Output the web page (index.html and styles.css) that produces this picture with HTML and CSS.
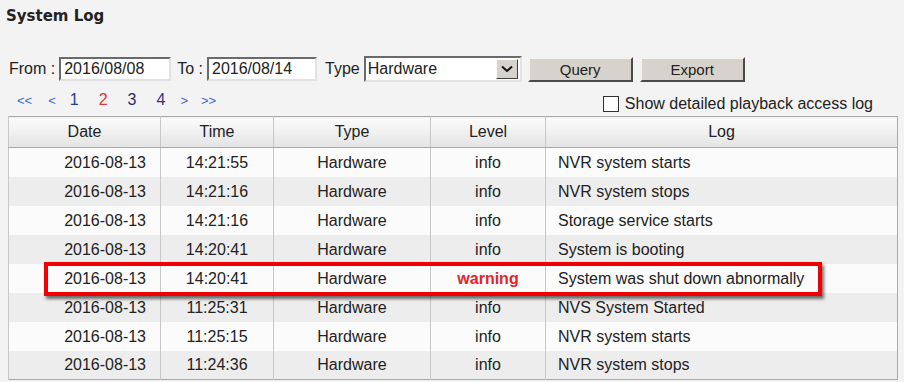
FILE: index.html
```html
<!DOCTYPE html>
<html lang="en">

<head>
    <meta charset="UTF-8">
    <title>System Log</title>
    <link rel="stylesheet" href="styles.css">
</head>

<body>
    <div class="page">
        <h1 class="page-title">System Log</h1>

        <div class="filter-bar">
            <label class="field-label">From :</label>
            <input class="date-input" type="text" value="2016/08/08">
            <label class="field-label">To :</label>
            <input class="date-input date-to" type="text" value="2016/08/14">
            <label class="field-label">Type</label>
            <div class="fake-select">
                <span class="fake-select-value">Hardware</span>
                <span class="fake-select-arrow">
                    <svg width="12" height="8" viewBox="0 0 12 8"><path d="M1 1.5 L6 6 L11 1.5" fill="none" stroke="#111" stroke-width="2"/></svg>
                </span>
            </div>
            <button class="btn">Query</button>
            <button class="btn">Export</button>
        </div>

        <div class="pager-row">
            <div class="pager">
                <a class="pg-arrow">&lt;&lt;</a>
                <a class="pg-arrow pg-tight">&lt;</a>
                <a class="pg-num pg-1">1</a>
                <a class="pg-num pg-current">2</a>
                <a class="pg-num pg-3">3</a>
                <a class="pg-num pg-4">4</a>
                <a class="pg-arrow pg-next">&gt;</a>
                <a class="pg-arrow">&gt;&gt;</a>
            </div>
            <label class="detail-check">
                <span class="check-box"></span>
                Show detailed playback access log
            </label>
        </div>

        <div class="table-wrap">
            <table class="log-table">
                <thead>
                    <tr>
                        <th class="col-date">Date</th>
                        <th class="col-time">Time</th>
                        <th class="col-type">Type</th>
                        <th class="col-level">Level</th>
                        <th class="col-log">Log</th>
                    </tr>
                </thead>
                <tbody>
                    <tr><td class="c-date">2016-08-13</td><td>14:21:55</td><td>Hardware</td><td>info</td><td class="c-log">NVR system starts</td></tr>
                    <tr><td class="c-date">2016-08-13</td><td>14:21:16</td><td>Hardware</td><td>info</td><td class="c-log">NVR system stops</td></tr>
                    <tr><td class="c-date">2016-08-13</td><td>14:21:16</td><td>Hardware</td><td>info</td><td class="c-log">Storage service starts</td></tr>
                    <tr><td class="c-date">2016-08-13</td><td>14:20:41</td><td>Hardware</td><td>info</td><td class="c-log">System is booting</td></tr>
                    <tr><td class="c-date">2016-08-13</td><td>14:20:41</td><td>Hardware</td><td class="lvl-warning">warning</td><td class="c-log">System was shut down abnormally</td></tr>
                    <tr><td class="c-date">2016-08-13</td><td>11:25:31</td><td>Hardware</td><td>info</td><td class="c-log">NVS System Started</td></tr>
                    <tr><td class="c-date">2016-08-13</td><td>11:25:15</td><td>Hardware</td><td>info</td><td class="c-log">NVR system starts</td></tr>
                    <tr><td class="c-date">2016-08-13</td><td>11:24:36</td><td>Hardware</td><td>info</td><td class="c-log">NVR system stops</td></tr>
                </tbody>
            </table>
            <!-- annotation box around the warning row -->
            <div class="highlight-box"></div>
        </div>
    </div>
</body>

</html>
```

FILE: styles.css
```css
* {
    margin: 0;
    padding: 0;
    box-sizing: border-box;
}

body {
    background-color: #f3f3f3;
    color: #222;
    font-family: "Liberation Sans", Arial, sans-serif;
    font-size: 16px;
    overflow: hidden;
}

.page {
    width: 904px;
    height: 382px;
}

.page-title {
    font-family: "DejaVu Sans", Verdana, sans-serif;
    font-size: 15px;
    font-weight: bold;
    line-height: 18px;
    color: #222;
    padding: 7px 0 0 6px;
    height: 56px;
}

/* filter row */
.filter-bar {
    display: flex;
    align-items: center;
    height: 26px;
    padding-left: 9px;
}

.field-label {
    margin-right: 4px;
}

.date-input {
    width: 112px;
    height: 24px;
    font-family: inherit;
    font-size: 16px;
    color: #222;
    padding: 0 3px;
    background: #fff;
    border: 2px solid;
    border-color: #6a6a6a #e2e2e2 #e2e2e2 #6a6a6a;
    margin-right: 6px;
    outline: none;
}

.date-to {
    width: 110px;
    margin-right: 8px;
}

.fake-select {
    display: flex;
    align-items: center;
    width: 158px;
    height: 26px;
    background: #fff;
    border: 2px solid;
    border-color: #6a6a6a #e2e2e2 #e2e2e2 #6a6a6a;
    margin-right: 6px;
    padding: 0 2px 0 2px;
}

.fake-select-value {
    flex: 1;
}

.fake-select-arrow {
    display: flex;
    align-items: center;
    justify-content: center;
    width: 22px;
    height: 20px;
    background: #d6d3cc;
    border: 1px solid;
    border-color: #fafafa #404040 #404040 #fafafa;
}

.btn {
    width: 105px;
    height: 25px;
    margin-right: 7px;
    font-family: inherit;
    font-size: 15px;
    color: #222;
    background-color: #d7d3cc;
    border: 2px solid;
    border-color: #f4f2ee #4a4a4a #4a4a4a #f4f2ee;
    cursor: pointer;
}

/* pager row */
.pager-row {
    display: flex;
    justify-content: space-between;
    align-items: flex-end;
    height: 34px;
    padding: 0 31px 3px 17px;
}

.pager {
    display: flex;
    align-items: baseline;
    align-self: flex-start;
    padding-top: 9px;
}

.pager a {
    cursor: pointer;
}

.pg-arrow {
    font-size: 13px;
    color: #3a66c8;
    margin-right: 16px;
}

.pg-tight {
    margin-right: 14px;
}

.pg-next {
    margin-right: 13px;
}

.pg-num {
    font-size: 16px;
    margin-right: 20px;
}

.pg-1 {
    color: #1d3d8f;
}

.pg-current {
    color: #e03333;
}

.pg-3 {
    color: #2a2a6a;
}

.pg-4 {
    color: #3c2f80;
    margin-right: 15px;
}

.detail-check {
    display: flex;
    align-items: center;
    gap: 6px;
    line-height: 18px;
}

.check-box {
    width: 16px;
    height: 16px;
    background: #fff;
    border: 1px solid #333;
}

/* table */
.table-wrap {
    position: relative;
    margin-left: 8px;
    width: 890px;
}

.log-table {
    width: 890px;
    border-collapse: collapse;
    table-layout: fixed;
    border: 1px solid #a9a9a9;
}

.log-table th {
    height: 31px;
    font-weight: normal;
    background: linear-gradient(#fbfbfb, #e4e4e4);
    border-bottom: 1px solid #a9a9a9;
    border-left: 1px solid #c8c8c8;
    text-align: center;
}

.log-table td {
    height: 29px;
    padding-top: 1px;
    text-align: center;
    border-left: 1px solid #c8c8c8;
    white-space: nowrap;
}

.log-table tbody tr:nth-child(odd) {
    background-color: #fbfbfb;
}

.log-table tbody tr:nth-child(even) {
    background-color: #ededed;
}

.col-date { width: 152px; }
.col-time { width: 113px; }
.col-type { width: 157px; }
.col-level { width: 115px; }

.log-table td.c-date {
    text-align: right;
    padding-right: 14px;
}

.log-table td.c-log {
    text-align: left;
    padding-left: 12px;
}

.lvl-warning {
    color: #e0262b;
    font-weight: bold;
}

.highlight-box {
    position: absolute;
    left: 36px;
    top: 146px;
    width: 778px;
    height: 34px;
    border: 4px solid #f00000;
    box-shadow: 2px 3px 3px rgba(0, 0, 0, 0.55);
}
```
